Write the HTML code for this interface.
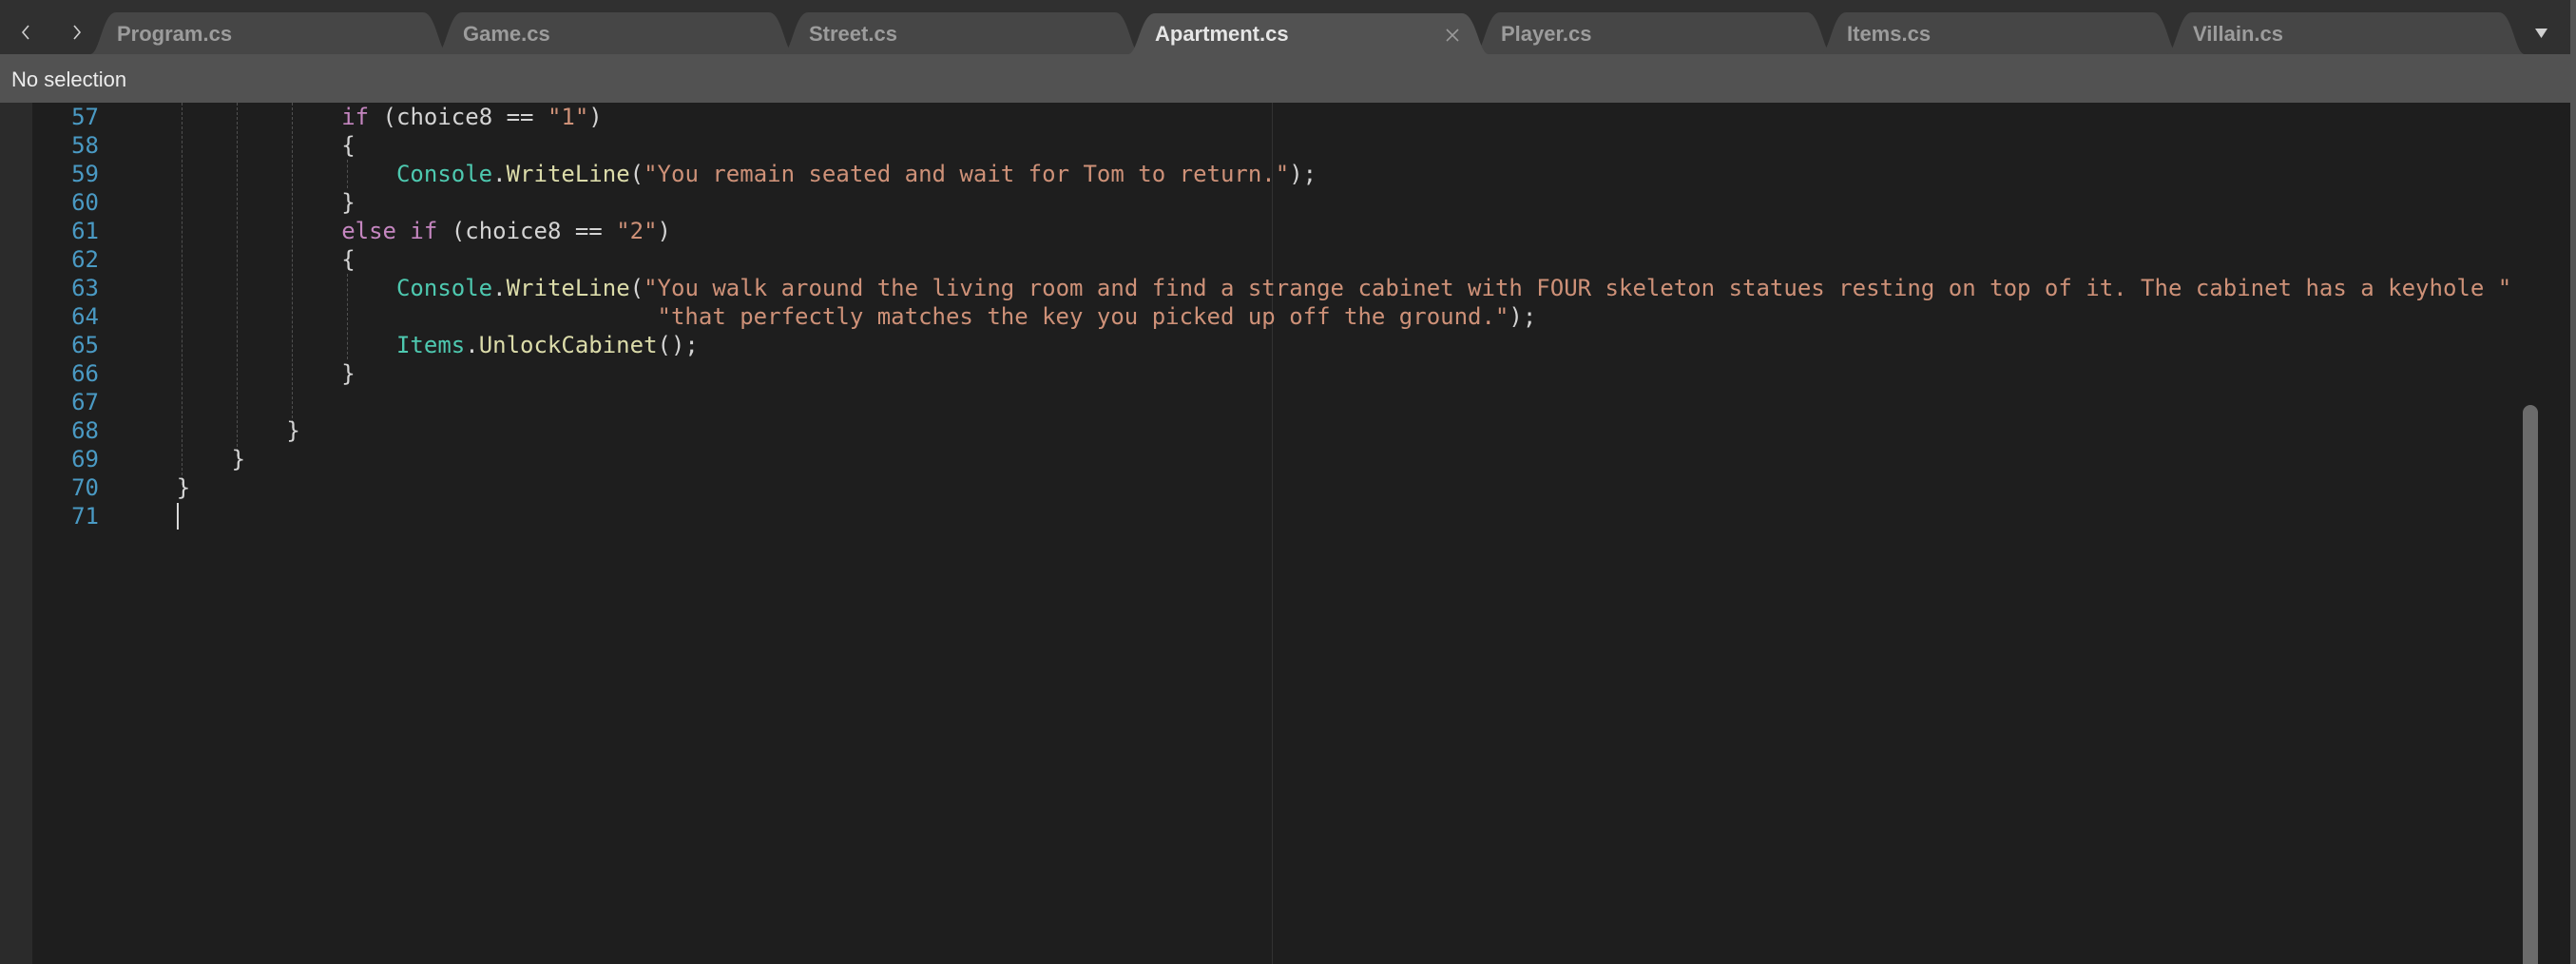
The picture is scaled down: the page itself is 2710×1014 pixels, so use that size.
<!DOCTYPE html>
<html><head><meta charset="utf-8"><style>
html,body{margin:0;padding:0;width:2710px;height:1014px;overflow:hidden;background:#1e1e1e;}
body{position:relative;font-family:"Liberation Sans",sans-serif;}
#tabbar{position:absolute;left:0;top:0;width:2710px;height:57px;background:#303030;}
#status{position:absolute;left:0;top:57px;width:2704px;height:51px;background:#525252;color:#ececec;font-size:22px;line-height:51px;}
#status span{position:absolute;left:12px;top:1px;}
#gutterstrip{position:absolute;left:0;top:108px;width:34px;height:906px;background:#2b2b2b;}
#rightstrip{position:absolute;left:2704px;top:0;width:6px;height:1014px;background:#555;}
#ruler{position:absolute;left:1338px;top:108px;width:1px;height:906px;background:#333;}
#scroll{position:absolute;left:2654px;top:426px;width:16px;height:600px;border-radius:8px;background:#6b6b6b;}
.tabtxt{position:absolute;top:23px;font-size:22px;font-weight:bold;color:#9c9c9c;line-height:26px;}
.ln{position:absolute;left:34px;width:70px;text-align:right;font-family:"DejaVu Sans Mono",monospace;font-size:24px;color:#4a9ac4;height:30px;line-height:30px;}
.code{position:absolute;left:128px;font-family:"DejaVu Sans Mono",monospace;font-size:24px;color:#d4d4d4;white-space:pre;height:30px;line-height:30px;}
.k{color:#c586c0}.t{color:#4ec9b0}.m{color:#dcdcaa}.s{color:#ce9178}
.g{position:absolute;width:0;border-left:1px dashed #505050;}
</style></head><body>
<div id="tabbar"></div>
<svg style="position:absolute;left:0;top:0" width="2710" height="57">
<g fill="#464646">
<path d="M95 57 C105 57 108 13 122 13 L445 13 C459 13 462 57 472 57Z"/>
<path d="M459 57 C469 57 472 13 486 13 L809 13 C823 13 826 57 836 57Z"/>
<path d="M823 57 C833 57 836 13 850 13 L1173 13 C1187 13 1190 57 1200 57Z"/>
<path d="M1551 57 C1561 57 1564 13 1578 13 L1901 13 C1915 13 1918 57 1928 57Z"/>
<path d="M1915 57 C1925 57 1928 13 1942 13 L2265 13 C2279 13 2282 57 2292 57Z"/>
<path d="M2279 57 C2289 57 2292 13 2306 13 L2629 13 C2643 13 2646 57 2656 57Z"/>
</g>
<path fill="#525252" d="M1187 57 C1197 57 1200 14 1215 14 L1538 14 C1553 14 1556 57 1566 57Z"/>
<path d="M30 27 L24 34 L30 41" fill="none" stroke="#cfcfcf" stroke-width="1.6"/>
<path d="M78 27 L84 34 L78 41" fill="none" stroke="#cfcfcf" stroke-width="1.6"/>
<path d="M2667 30 L2680 30 L2673.5 40Z" fill="#d0d0d0"/>
<path d="M1522 31 L1534 43 M1534 31 L1522 43" stroke="#9a9a9a" stroke-width="1.6"/>
</svg>
<div class="tabtxt" style="left:123px">Program.cs</div>
<div class="tabtxt" style="left:487px">Game.cs</div>
<div class="tabtxt" style="left:851px">Street.cs</div>
<div class="tabtxt" style="left:1215px;color:#e6e6e6">Apartment.cs</div>
<div class="tabtxt" style="left:1579px">Player.cs</div>
<div class="tabtxt" style="left:1943px">Items.cs</div>
<div class="tabtxt" style="left:2307px">Villain.cs</div>
<div id="status"><span>No selection</span></div>
<div id="gutterstrip"></div>
<div id="rightstrip"></div>
<div id="ruler"></div>
<div id="scroll"></div>

<div class="g" style="left:191px;top:108px;height:402px"></div>
<div class="g" style="left:249px;top:108px;height:372px"></div>
<div class="g" style="left:307px;top:108px;height:342px"></div>
<div class="g" style="left:365px;top:168px;height:30px"></div>
<div class="g" style="left:365px;top:288px;height:90px"></div>

<div class="ln" style="top:108px">57</div>
<div class="ln" style="top:138px">58</div>
<div class="ln" style="top:168px">59</div>
<div class="ln" style="top:198px">60</div>
<div class="ln" style="top:228px">61</div>
<div class="ln" style="top:258px">62</div>
<div class="ln" style="top:288px">63</div>
<div class="ln" style="top:318px">64</div>
<div class="ln" style="top:348px">65</div>
<div class="ln" style="top:378px">66</div>
<div class="ln" style="top:408px">67</div>
<div class="ln" style="top:438px">68</div>
<div class="ln" style="top:468px">69</div>
<div class="ln" style="top:498px">70</div>
<div class="ln" style="top:528px">71</div>

<div class="code" style="top:108px">                <span class="k">if</span> (choice8 == <span class="s">"1"</span>)</div>
<div class="code" style="top:138px">                {</div>
<div class="code" style="top:168px">                    <span class="t">Console</span>.<span class="m">WriteLine</span>(<span class="s">"You remain seated and wait for Tom to return."</span>);</div>
<div class="code" style="top:198px">                }</div>
<div class="code" style="top:228px">                <span class="k">else if</span> (choice8 == <span class="s">"2"</span>)</div>
<div class="code" style="top:258px">                {</div>
<div class="code" style="top:288px">                    <span class="t">Console</span>.<span class="m">WriteLine</span>(<span class="s">"You walk around the living room and find a strange cabinet with FOUR skeleton statues resting on top of it. The cabinet has a keyhole "</span></div>
<div class="code" style="top:318px">                                       <span class="s">"that perfectly matches the key you picked up off the ground."</span>);</div>
<div class="code" style="top:348px">                    <span class="t">Items</span>.<span class="m">UnlockCabinet</span>();</div>
<div class="code" style="top:378px">                }</div>
<div class="code" style="top:438px">            }</div>
<div class="code" style="top:468px">        }</div>
<div class="code" style="top:498px">    }</div>
<div style="position:absolute;left:186px;top:529px;width:2px;height:28px;background:#d8d8d8"></div>
</body></html>
